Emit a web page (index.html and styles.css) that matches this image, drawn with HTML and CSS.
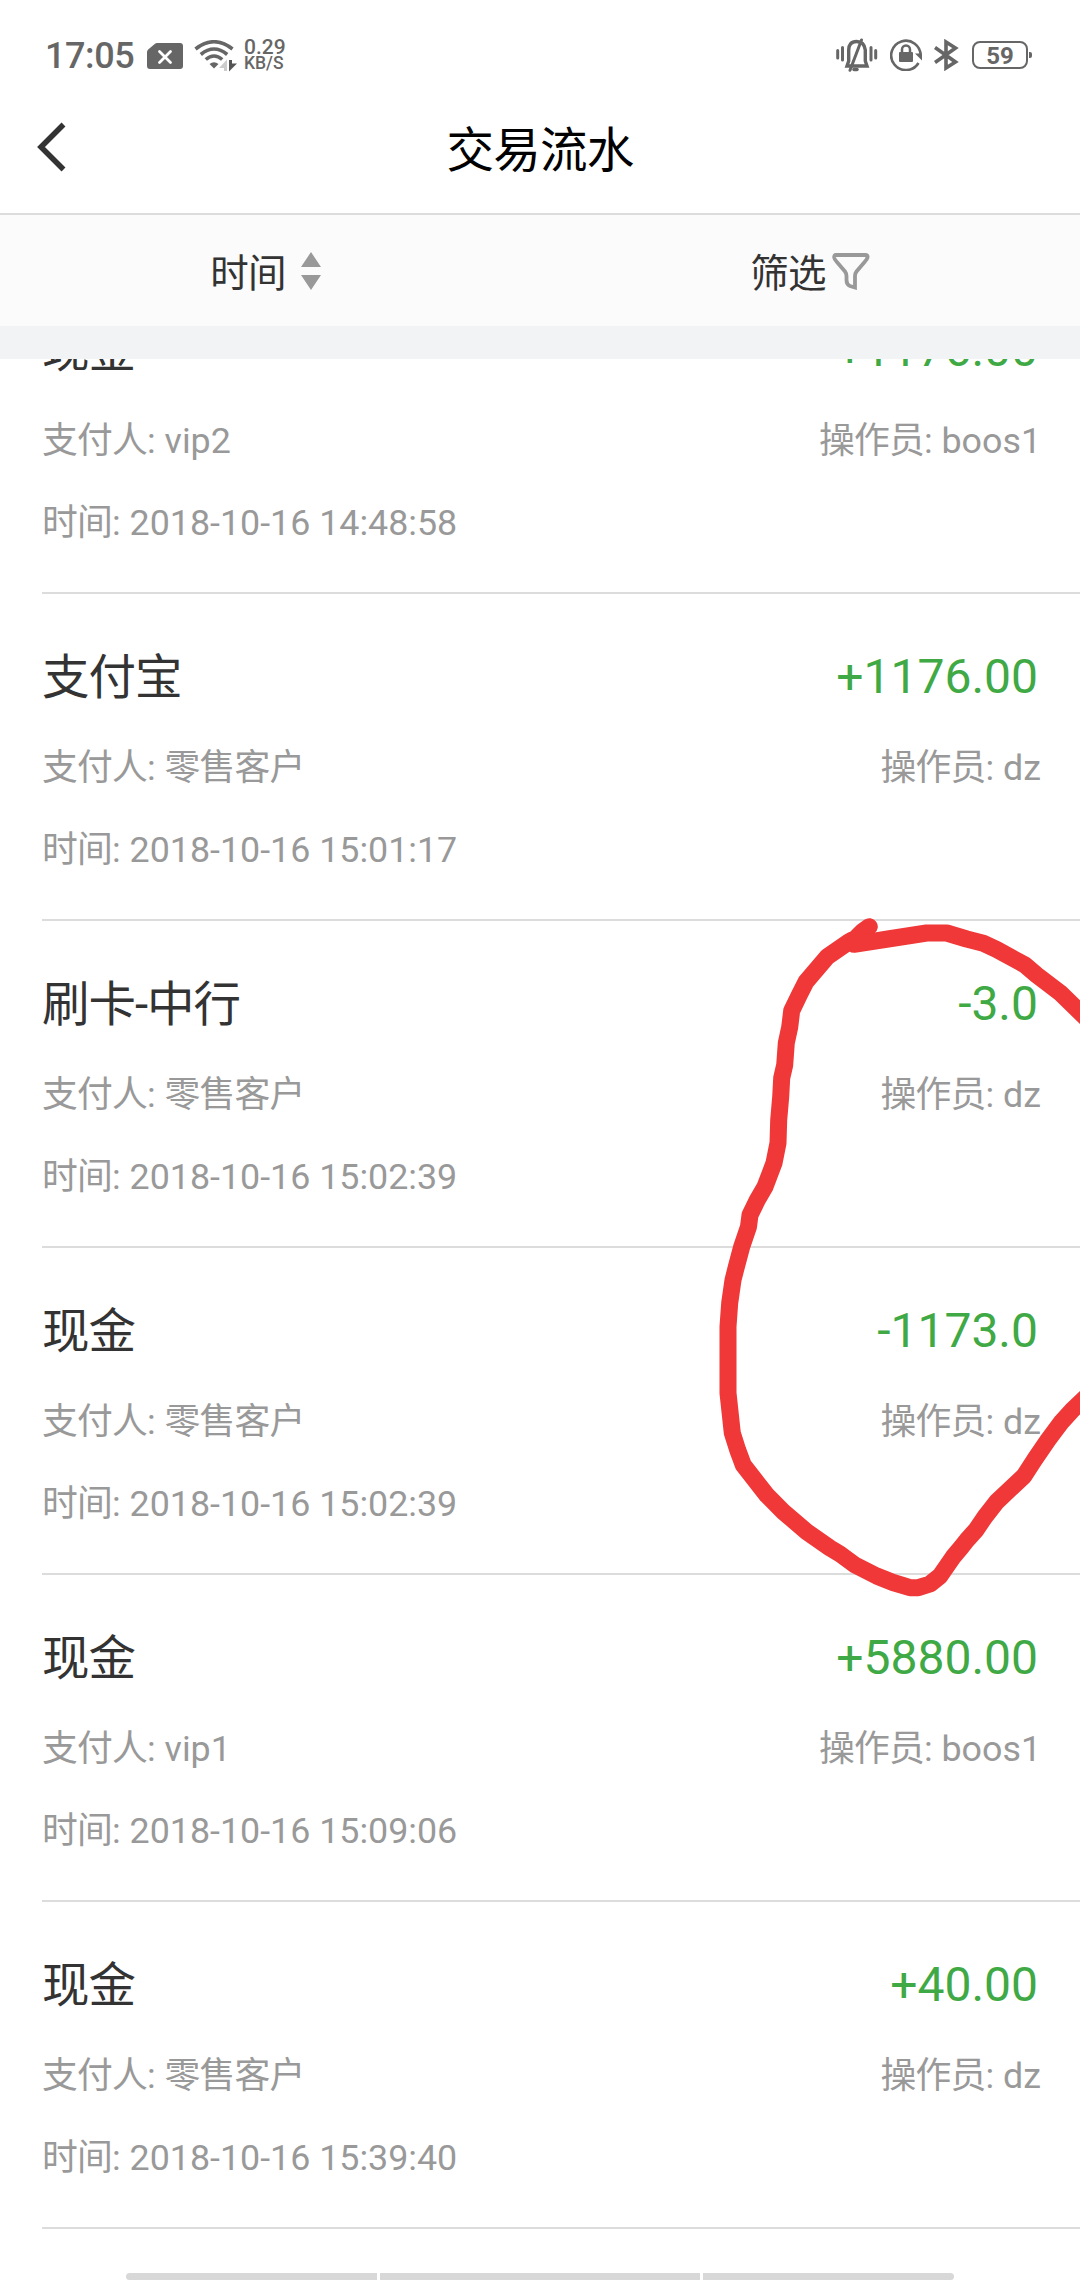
FILE: index.html
```
<!DOCTYPE html>
<html lang="zh-CN">
<head>
    <meta charset="UTF-8">
    <meta name="viewport" content="width=device-width, initial-scale=1.0">
    <title>交易流水</title>
    <link rel="stylesheet" href="styles.css">
</head>
<body>
    <div class="status-bar">
        <span class="clock">17:05</span>
        <svg class="icon-sim" width="36" height="26" viewBox="0 0 36 26">
            <path d="M10 0H33a3 3 0 0 1 3 3V23a3 3 0 0 1-3 3H3a3 3 0 0 1-3-3V9Q0 7.500 1.200 6.500L8 0.700Q9 0 10 0Z" fill="#666"/>
            <path d="M12.500 8.500L23.500 19.500M23.500 8.500L12.500 19.500" stroke="#fff" stroke-width="2.800" stroke-linecap="round"/>
        </svg>
        <svg class="icon-wifi" width="43" height="32" viewBox="0 0 43 32">
            <g fill="none" stroke="#666" stroke-width="3.600">
                <path d="M1.500 9Q20 -5.500 38.500 9"/>
                <path d="M6.800 14.500Q20 3.500 33.200 14.500"/>
                <path d="M11.800 19.500Q20 12.500 28.200 19.500"/>
            </g>
            <path d="M15.500 24Q20 20.500 24.500 24L20 28.500Z" fill="#666"/>
            <path d="M25 28L33 19.500V31H30V28Z" fill="#ccc"/>
            <path d="M35 20H38V23.500H43L35 31.500Z" fill="#555"/>
        </svg>
        <div class="net-speed">
            <span class="speed-value">0.29</span>
            <span class="speed-unit">KB/S</span>
        </div>
        <div class="status-right">
            <svg width="42" height="34" viewBox="0 0 42 34">
                <g fill="none" stroke="#666" stroke-width="3" stroke-linecap="round">
                    <path d="M1.700 12.500V20M6.500 9.500V22M35 9.500V22M39.700 12.500V20"/>
                    <path d="M25.500 2L14 32.300"/>
                    <path d="M18 31.500H21" stroke-width="3.500"/>
                </g>
                <path d="M11 28L12.700 23V12Q12.700 3.500 20.500 3.500T29.300 12V23L31 28Z" fill="none" stroke="#666" stroke-width="3.400"/>
            </svg>
            <svg width="32" height="32" viewBox="0 0 32 32">
                <path d="M28.500 24A14.700 14.700 0 1 1 30.600 17" fill="none" stroke="#666" stroke-width="2.600"/>
                <path d="M25 14.500H32V21.500Z" fill="#666"/>
                <rect x="9" y="13" width="14" height="10" rx="1" fill="#666"/>
                <path d="M12 13.500V10.500a4 4 0 0 1 8 0V13.500" fill="none" stroke="#666" stroke-width="2.500"/>
            </svg>
            <svg class="icon-bt" width="25" height="32" viewBox="0 0 25 32">
                <path d="M1 8.500L21.500 23L12 29V3L21.500 9L1 23.500" fill="none" stroke="#666" stroke-width="3.600"/>
            </svg>
            <div class="battery">59</div>
        </div>
    </div>

    <div class="nav-bar">
        <svg class="back" width="29" height="50" viewBox="0 0 29 50">
            <path d="M26.500 2.500L4 25L26.500 47.500" fill="none" stroke="#333" stroke-width="5.500"/>
        </svg>
        <h1>交易流水</h1>
    </div>

    <div class="filter-bar">
        <div class="filter-item">
            <span>时间</span>
            <svg width="38" height="38" viewBox="0 0 38 38">
                <path d="M19 0L29 15H9ZM9 23H29L19 38Z" fill="#999"/>
            </svg>
        </div>
        <div class="filter-item">
            <span>筛选</span>
            <svg width="38" height="38" viewBox="0 0 38 38">
                <path d="M4 3H34Q36 3 35.500 5.500Q35 7.500 33 9.500L24.500 19.500Q23 21.500 23 24V35.500L18 34Q14.500 32.500 14.500 28V24Q14.500 21.500 13 19.500L4.500 9.500Q2.500 7.500 2.200 5.500Q2 3 4 3Z" fill="none" stroke="#999" stroke-width="3.800"/>
            </svg>
        </div>
    </div>

    <div class="list">
        <div class="row">
            <div class="line main"><span class="cn">现金</span><span class="amount">+1176.00</span></div>
            <div class="line"><span><span class="cn">支付人</span>: vip2</span><span><span class="cn">操作员</span>: boos1</span></div>
            <div class="line"><span><span class="cn">时间</span>: 2018-10-16 14:48:58</span></div>
        </div>
        <div class="row">
            <div class="line main"><span class="cn">支付宝</span><span class="amount">+1176.00</span></div>
            <div class="line"><span><span class="cn">支付人</span>: <span class="cn">零售客户</span></span><span><span class="cn">操作员</span>: dz</span></div>
            <div class="line"><span><span class="cn">时间</span>: 2018-10-16 15:01:17</span></div>
        </div>
        <div class="row">
            <div class="line main"><span class="cn">刷卡-中行</span><span class="amount">-3.0</span></div>
            <div class="line"><span><span class="cn">支付人</span>: <span class="cn">零售客户</span></span><span><span class="cn">操作员</span>: dz</span></div>
            <div class="line"><span><span class="cn">时间</span>: 2018-10-16 15:02:39</span></div>
        </div>
        <div class="row">
            <div class="line main"><span class="cn">现金</span><span class="amount">-1173.0</span></div>
            <div class="line"><span><span class="cn">支付人</span>: <span class="cn">零售客户</span></span><span><span class="cn">操作员</span>: dz</span></div>
            <div class="line"><span><span class="cn">时间</span>: 2018-10-16 15:02:39</span></div>
        </div>
        <div class="row">
            <div class="line main"><span class="cn">现金</span><span class="amount">+5880.00</span></div>
            <div class="line"><span><span class="cn">支付人</span>: vip1</span><span><span class="cn">操作员</span>: boos1</span></div>
            <div class="line"><span><span class="cn">时间</span>: 2018-10-16 15:09:06</span></div>
        </div>
        <div class="row">
            <div class="line main"><span class="cn">现金</span><span class="amount">+40.00</span></div>
            <div class="line"><span><span class="cn">支付人</span>: <span class="cn">零售客户</span></span><span><span class="cn">操作员</span>: dz</span></div>
            <div class="line"><span><span class="cn">时间</span>: 2018-10-16 15:39:40</span></div>
        </div>
    </div>

    <div class="gesture-bar">
        <span></span>
        <span></span>
        <span></span>
    </div>

    <!-- red marker drawn over the refund rows -->
    <svg class="marker" width="1080" height="2280" viewBox="0 0 1080 2280">
        <path d="M869.300 926.700L862 932L856 938L849 941.700L827.300 956.700L806 981.700L799.300 995L791.700 1010.700L789.700 1027.300L786.300 1043L784.700 1065L781.700 1078L780.700 1096.700L778.700 1120L778 1143L774 1163L765 1186.700L757.300 1200L750 1215L748.500 1226.700L741.700 1246.700L736.300 1267L733 1280L729.700 1303L728 1326.700V1393L732.300 1433L737.700 1450L743.300 1465L766.700 1495L783.300 1511.700L806.700 1531.700L830 1548L840 1554L855 1565L876.700 1576L893 1582.500L910 1587.700H918.300L930 1584L940 1576L953.300 1556.700L961.700 1546.700L967 1540L976 1530L985 1516.700L996.700 1501.700L1024 1476L1035 1459L1048 1440L1061.700 1421.700L1071.700 1410.700L1086 1397"/>
        <path d="M854 944.300L888 939L926.700 933H946.700L966.700 939L983.300 943.300L996.700 949.500L1025 965L1036.700 975L1060 992.700L1086 1018"/>
    </svg>
</body>
</html>
```
FILE: styles.css
```
* {
    box-sizing: border-box;
}
body {
    margin: 0;
    width: 1080px;
    height: 2280px;
    display: flex;
    flex-direction: column;
    position: relative;
    overflow: hidden;
    background-color: #fff;
    font-family: Roboto, "Noto Sans CJK SC", sans-serif;
    color: #333;
}
svg {
    display: block;
    flex-shrink: 0;
}

/* status bar */
.status-bar {
    height: 80px;
    padding: 32px 48px 0 45px;
    display: flex;
    align-items: flex-start;
    color: #666;
}
.clock {
    width: 102px;
    font-size: 36px;
    font-weight: 500;
    line-height: 49px;
    letter-spacing: -0.4px;
}
.icon-sim {
    margin-top: 11px;
}
.icon-wifi {
    margin: 8px 7px 0 11px;
}
.net-speed {
    display: flex;
    flex-direction: column;
    margin-top: 5px;
    font-weight: 500;
}
.speed-value {
    font-size: 21px;
    line-height: 20px;
}
.speed-unit {
    font-size: 17.5px;
    line-height: 12px;
}
.status-right {
    margin-left: auto;
    padding: 6px 4px 0 0;
    display: flex;
    align-items: center;
}
.status-right svg {
    margin-right: 12px;
}
.status-right .icon-bt {
    margin-right: 13px;
}
.battery {
    width: 56px;
    height: 28px;
    border: 2px solid #666;
    border-radius: 8px;
    font-size: 24px;
    font-weight: 700;
    line-height: 26px;
    text-align: center;
    position: relative;
}
.battery::after {
    content: "";
    position: absolute;
    right: -6px;
    top: 9px;
    width: 3px;
    height: 6px;
    border-radius: 0 2px 2px 0;
    background-color: #666;
}

/* title */
.nav-bar {
    height: 135px;
    padding: 0 37px;
    display: grid;
    grid-template-columns: 29px 1fr 29px;
    border-bottom: 2px solid #dcdcdc;
}
.back {
    margin-top: 42px;
}
.nav-bar h1 {
    margin: 0;
    padding-top: 3px;
    font-size: 47.5px;
    font-weight: 400;
    line-height: 136px;
    letter-spacing: -0.8px;
    text-align: center;
    color: #000;
    height: 133px;
}

/* sort and filter */
.filter-bar {
    height: 144px;
    display: flex;
    background-color: #fbfbfb;
    border-bottom: 33px solid #f2f3f5;
}
.filter-item {
    flex: 1;
    display: flex;
    align-items: center;
    justify-content: center;
    gap: 6px;
    padding-top: 1px;
    font-size: 38.5px;
    letter-spacing: -0.8px;
}
.filter-item span {
    margin-top: -2px;
}

/* records */
.list {
    flex: 1;
    overflow: hidden;
}
.row {
    height: 327px;
    margin-left: 42px;
    padding: 35px 39px 0 0;
    border-bottom: 2px solid #dcdcdc;
}
.row:first-child {
    margin-top: -92px;
}
.line {
    display: flex;
    justify-content: space-between;
    font-size: 35.8px;
    line-height: 82px;
    color: #999;
}
.line.main {
    height: 98px;
    padding-right: 3px;
    font-size: 48px;
    line-height: 96px;
    color: #333;
}
.cn {
    letter-spacing: -0.022em;
}
.main .cn {
    font-size: 47.5px;
    line-height: 98px;
}
.line .amount {
    color: #3fa945;
}

/* bottom gesture hints */
.gesture-bar {
    height: 7px;
    padding: 0 126px;
    display: grid;
    grid-template-columns: 251px 320px 251px;
    gap: 3px;
}
.gesture-bar span {
    background-color: #d8d8d8;
}
.gesture-bar span:first-child {
    border-radius: 4px 0 0 4px;
}
.gesture-bar span:last-child {
    border-radius: 0 4px 4px 0;
}

.marker {
    position: absolute;
    left: 0;
    top: 0;
    pointer-events: none;
}
.marker path {
    fill: none;
    stroke: #ef3837;
    stroke-width: 17px;
    stroke-linecap: round;
    stroke-linejoin: round;
}
```
